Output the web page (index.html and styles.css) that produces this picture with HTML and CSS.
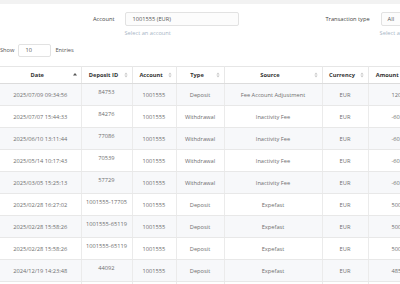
FILE: index.html
```html
<!DOCTYPE html>
<html>
<head>
<meta charset="utf-8">
<link rel="stylesheet" href="styles.css">
</head>
<body>
<div class="topbar"></div>
<div class="page">
  <div class="filters">
    <div class="filter filter-account">
      <label class="flabel">Account</label>
      <div class="fcontrol">
        <div class="select select-account">1001555 (EUR)</div>
        <div class="help">Select an account</div>
      </div>
    </div>
    <div class="filter filter-type">
      <label class="flabel">Transaction type</label>
      <div class="fcontrol">
        <div class="select select-type">All</div>
        <div class="help">Select a transaction type</div>
      </div>
    </div>
  </div>
  <div class="length">
    <span>Show</span>
    <div class="len-input">10</div>
    <span>Entries</span>
  </div>
  <div class="table-wrap">
    <table class="grid">
      <colgroup>
        <col class="c-date"><col class="c-id"><col class="c-acc"><col class="c-type"><col class="c-src"><col class="c-cur"><col class="c-amt">
      </colgroup>
      <thead>
        <tr>
          <th><div class="th"><span class="tt">Date</span><svg class="sort" viewBox="0 0 4 6"><path d="M0 3.4 L2 1 L4 3.4 Z" fill="#555"/></svg></div></th>
          <th><div class="th"><span class="tt">Deposit ID</span><svg class="sort" viewBox="0 0 4 6"><path d="M0.4 2.5 L2 0.6 L3.6 2.5 Z M0.4 3.5 L2 5.4 L3.6 3.5 Z" fill="#c8c8c8"/></svg></div></th>
          <th><div class="th"><span class="tt">Account</span><svg class="sort" viewBox="0 0 4 6"><path d="M0.4 2.5 L2 0.6 L3.6 2.5 Z M0.4 3.5 L2 5.4 L3.6 3.5 Z" fill="#c8c8c8"/></svg></div></th>
          <th><div class="th"><span class="tt">Type</span><svg class="sort" viewBox="0 0 4 6"><path d="M0.4 2.5 L2 0.6 L3.6 2.5 Z M0.4 3.5 L2 5.4 L3.6 3.5 Z" fill="#c8c8c8"/></svg></div></th>
          <th><div class="th"><span class="tt">Source</span><svg class="sort" viewBox="0 0 4 6"><path d="M0.4 2.5 L2 0.6 L3.6 2.5 Z M0.4 3.5 L2 5.4 L3.6 3.5 Z" fill="#c8c8c8"/></svg></div></th>
          <th><div class="th"><span class="tt">Currency</span><svg class="sort" viewBox="0 0 4 6"><path d="M0.4 2.5 L2 0.6 L3.6 2.5 Z M0.4 3.5 L2 5.4 L3.6 3.5 Z" fill="#c8c8c8"/></svg></div></th>
          <th><div class="th th-amt"><span class="tt">Amount</span><svg class="sort" viewBox="0 0 4 6"><path d="M0.4 2.5 L2 0.6 L3.6 2.5 Z M0.4 3.5 L2 5.4 L3.6 3.5 Z" fill="#c8c8c8"/></svg></div></th>
        </tr>
      </thead>
      <tbody>
        <tr class="odd"><td>2025/07/09 09:34:56</td><td class="did">84753</td><td>1001555</td><td>Deposit</td><td>Fee Account Adjustment</td><td>EUR</td><td class="amt">120.00</td></tr>
        <tr><td>2025/07/07 15:44:33</td><td class="did">84276</td><td>1001555</td><td>Withdrawal</td><td>Inactivity Fee</td><td>EUR</td><td class="amt">-60.00</td></tr>
        <tr class="odd"><td>2025/06/10 13:11:44</td><td class="did">77086</td><td>1001555</td><td>Withdrawal</td><td>Inactivity Fee</td><td>EUR</td><td class="amt">-60.00</td></tr>
        <tr><td>2025/05/14 10:17:43</td><td class="did">70539</td><td>1001555</td><td>Withdrawal</td><td>Inactivity Fee</td><td>EUR</td><td class="amt">-60.00</td></tr>
        <tr class="odd"><td>2025/03/05 15:25:13</td><td class="did">57729</td><td>1001555</td><td>Withdrawal</td><td>Inactivity Fee</td><td>EUR</td><td class="amt">-60.00</td></tr>
        <tr><td>2025/02/28 16:27:02</td><td class="did">1001555-17705</td><td>1001555</td><td>Deposit</td><td>Expefast</td><td>EUR</td><td class="amt">500.00</td></tr>
        <tr class="odd"><td>2025/02/28 15:58:26</td><td class="did">1001555-65119</td><td>1001555</td><td>Deposit</td><td>Expefast</td><td>EUR</td><td class="amt">500.00</td></tr>
        <tr><td>2025/02/28 15:58:26</td><td class="did">1001555-65119</td><td>1001555</td><td>Deposit</td><td>Expefast</td><td>EUR</td><td class="amt">500.00</td></tr>
        <tr class="odd"><td>2024/12/19 14:23:48</td><td class="did">44092</td><td>1001555</td><td>Deposit</td><td>Expefast</td><td>EUR</td><td class="amt">485.00</td></tr>
        <tr><td>2024/11/02 10:12:05</td><td class="did">40011</td><td>1001555</td><td>Deposit</td><td>Expefast</td><td>EUR</td><td class="amt">300.00</td></tr>
      </tbody>
    </table>
  </div>
</div>
</body>
</html>
```

FILE: styles.css
```css
html, body {
  margin: 0;
  padding: 0;
  overflow: hidden;
  background: #ffffff;
}
body {
  font-family: "Open Sans", "Noto Sans", "DejaVu Sans", sans-serif;
  font-size: 5.7px;
  color: #666;
  width: 400px;
  height: 284px;
}
.topbar {
  height: 4px;
  background: #f2f2f2;
}
.page {
  width: 440px;
}
.filters {
  display: flex;
  padding-top: 8px;
  padding-left: 93px;
  gap: 86px;
  height: 33px;
  box-sizing: border-box;
}
.filter {
  display: flex;
  gap: 11px;
  flex: none;
}
.filter-type { gap: 11px; }
.flabel {
  color: #444;
  line-height: 8px;
  padding-top: 3px;
  white-space: nowrap;
  flex: none;
}
.fcontrol {
  display: flex;
  flex-direction: column;
  gap: 3px;
}
.select {
  height: 14px;
  box-sizing: border-box;
  border: 1px solid #e2e2e2;
  border-radius: 2px;
  background: #fcfcfc;
  color: #555;
  padding-left: 6px;
  line-height: 12px;
}
.select-account { width: 114px; }
.select-type { width: 60px; }
.help {
  color: #a7b5c6;
  margin-left: -1px;
  line-height: 8px;
  white-space: nowrap;
}
.length {
  display: flex;
  align-items: center;
  gap: 4px;
  height: 29px;
  padding-bottom: 3px;
  box-sizing: border-box;
  color: #555;
}
.len-input {
  width: 33px;
  height: 13px;
  box-sizing: border-box;
  border: 1px solid #e2e2e2;
  border-radius: 2px;
  padding-left: 6px;
  line-height: 11px;
  color: #555;
}
.table-wrap {
  overflow: hidden;
  width: 440px;
}
.grid {
  border-collapse: collapse;
  table-layout: fixed;
  width: 416px;
  border-top: 1px solid #e6e6e6;
}
.c-date { width: 81px; }
.c-id { width: 51px; }
.c-acc { width: 44px; }
.c-type { width: 48px; }
.c-src { width: 98px; }
.c-cur { width: 46px; }
.c-amt { width: 48px; }
.grid th {
  height: 16px;
  padding: 0;
  border-left: 1px solid #e8e8e8;
  border-bottom: 1px solid #dcdcdc;
  color: #333;
  font-weight: 700;
}
.grid th:first-child, .grid td:first-child { border-left: none; }
.th {
  display: flex;
  align-items: center;
  padding: 0 4px 0 2px;
}
.th-amt {
  padding-right: 8px;
}
.tt {
  flex: 1;
  text-align: center;
  white-space: nowrap;
}
.sort {
  width: 4px;
  height: 6px;
  flex: none;
}
.grid td {
  height: 21px;
  padding: 0;
  text-align: center;
  vertical-align: middle;
  border-left: 1px solid #ebebeb;
  border-bottom: 1px solid #e8e8e8;
  white-space: nowrap;
  color: #6e6e6e;
}
.grid tr.odd td { background: #f7f8fa; }
.grid td.did {
  vertical-align: top;
  padding-top: 4px;
  box-sizing: border-box;
}
.grid td.amt {
  text-align: left;
  padding-left: 23px;
}
```
